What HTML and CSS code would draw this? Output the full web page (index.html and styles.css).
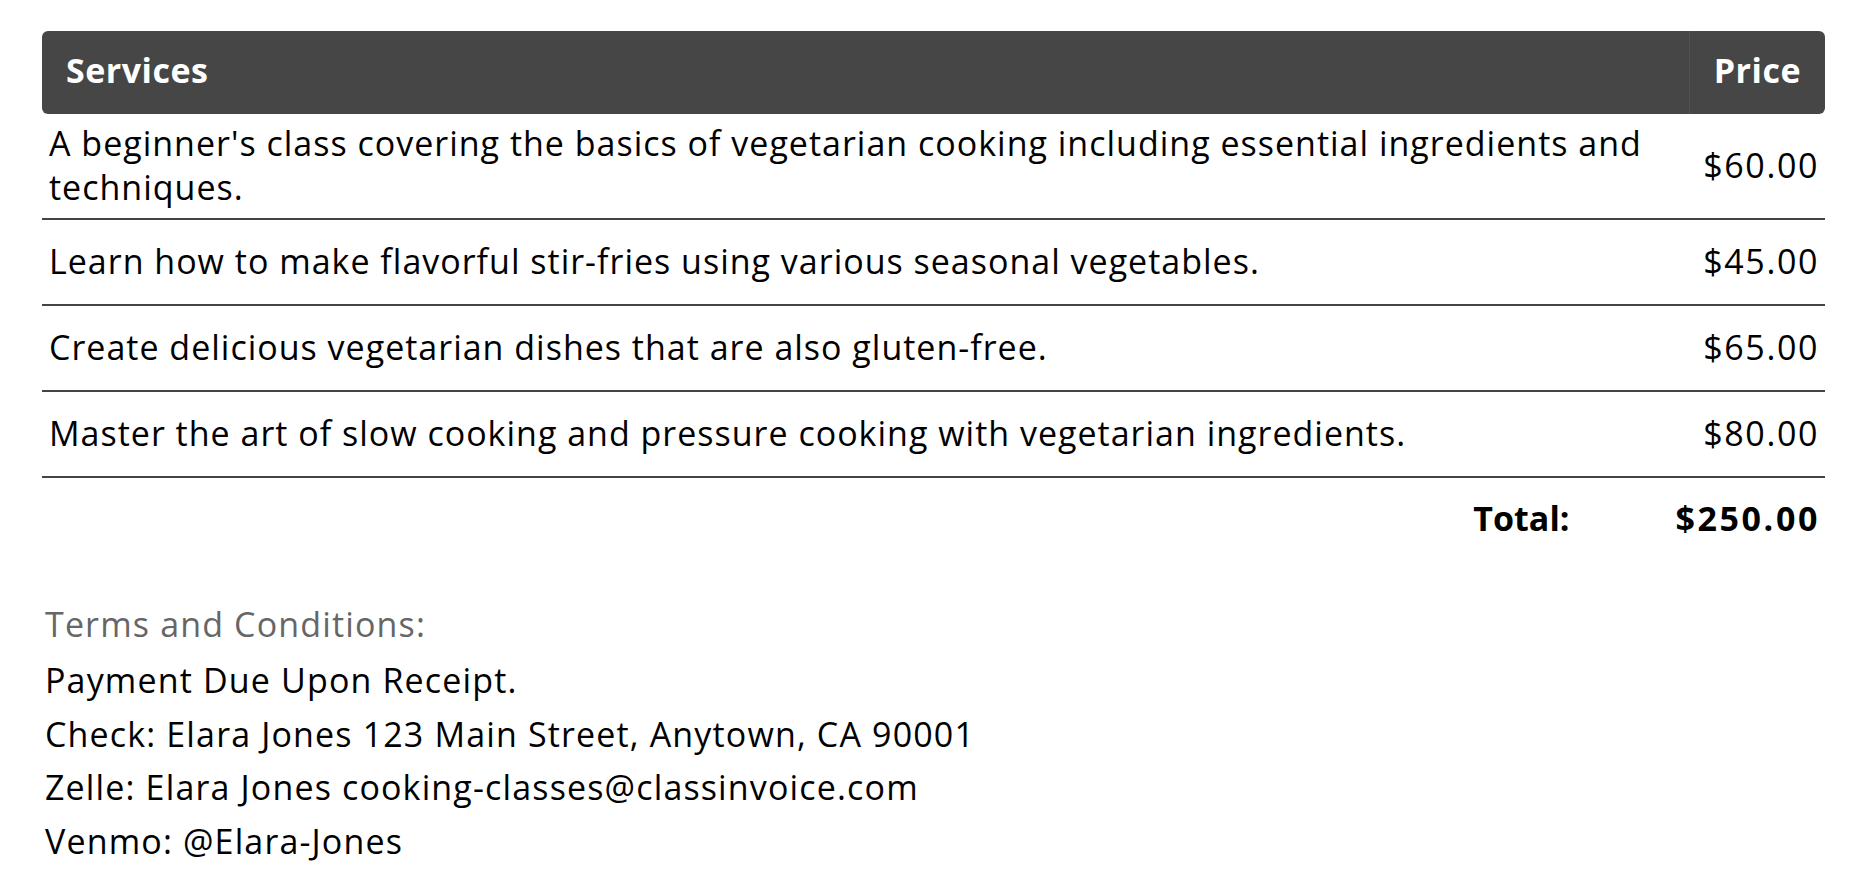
FILE: index.html
```html
<!DOCTYPE html>
<html>
<head>
<meta charset="utf-8">
<link rel="stylesheet" href="styles.css">
</head>
<body>
<div class="invoice">
  <table class="items">
    <thead>
      <tr>
        <th class="col-service">Services</th>
        <th class="col-price">Price</th>
      </tr>
    </thead>
    <tbody>
      <tr>
        <td class="desc">A beginner's class covering the basics of vegetarian cooking including essential ingredients and techniques.</td>
        <td class="price">$60.00</td>
      </tr>
      <tr>
        <td class="desc">Learn how to make flavorful stir-fries using various seasonal vegetables.</td>
        <td class="price">$45.00</td>
      </tr>
      <tr>
        <td class="desc">Create delicious vegetarian dishes that are also gluten-free.</td>
        <td class="price">$65.00</td>
      </tr>
      <tr>
        <td class="desc">Master the art of slow cooking and pressure cooking with vegetarian ingredients.</td>
        <td class="price">$80.00</td>
      </tr>
    </tbody>
  </table>
  <div class="total">
    <span class="total-label">Total:</span>
    <span class="total-value">$250.00</span>
  </div>
  <div class="terms">
    <div class="terms-title">Terms and Conditions:</div>
    <div class="terms-line">Payment Due Upon Receipt.</div>
    <div class="terms-line">Check: Elara Jones 123 Main Street, Anytown, CA 90001</div>
    <div class="terms-line">Zelle: Elara Jones cooking-classes@classinvoice.com</div>
    <div class="terms-line">Venmo: @Elara-Jones</div>
  </div>
</div>
</body>
</html>
```

FILE: styles.css
```css
html, body {
  margin: 0;
  padding: 0;
  background: #ffffff;
}
body {
  font-family: "Open Sans", "Liberation Sans", sans-serif;
  font-weight: 500;
  letter-spacing: 1px;
  color: #000;
}
.invoice {
  padding: 31px 43px 0 42px;
}
.items {
  width: 100%;
  border-collapse: separate;
  border-spacing: 0;
  font-size: 34px;
}
.items th {
  background: #464646;
  color: #fff;
  font-weight: 700;
  letter-spacing: 0.5px;
  height: 83px;
  padding: 0 24px 5px;
  box-sizing: border-box;
  vertical-align: middle;
}
.col-service {
  text-align: left;
  border-radius: 6px 0 0 6px;
}
.col-price {
  text-align: right;
  width: 87px;
  border-left: 1px solid #525252;
  border-radius: 0 6px 6px 0;
}
.items td {
  height: 86px;
  padding: 7px 6px 9px 7px;
  box-sizing: border-box;
  border-bottom: 2px solid #444;
  line-height: 44px;
  vertical-align: middle;
}
.items td.price {
  text-align: right;
  white-space: nowrap;
  letter-spacing: 1.6px;
}
.total {
  display: flex;
  justify-content: flex-end;
  align-items: center;
  height: 80px;
  padding-right: 5px;
  font-size: 34px;
  font-weight: 700;
  gap: 106px;
}
.total-label {
  letter-spacing: 0;
}
.total-value {
  letter-spacing: 2.6px;
}
.terms {
  margin-top: 40px;
  padding-left: 3px;
  font-size: 34px;
  letter-spacing: 1.15px;
}
.terms-title {
  color: #666666;
  line-height: 52px;
  margin-bottom: 4px;
}
.terms-line {
  line-height: 53.6px;
}
```
